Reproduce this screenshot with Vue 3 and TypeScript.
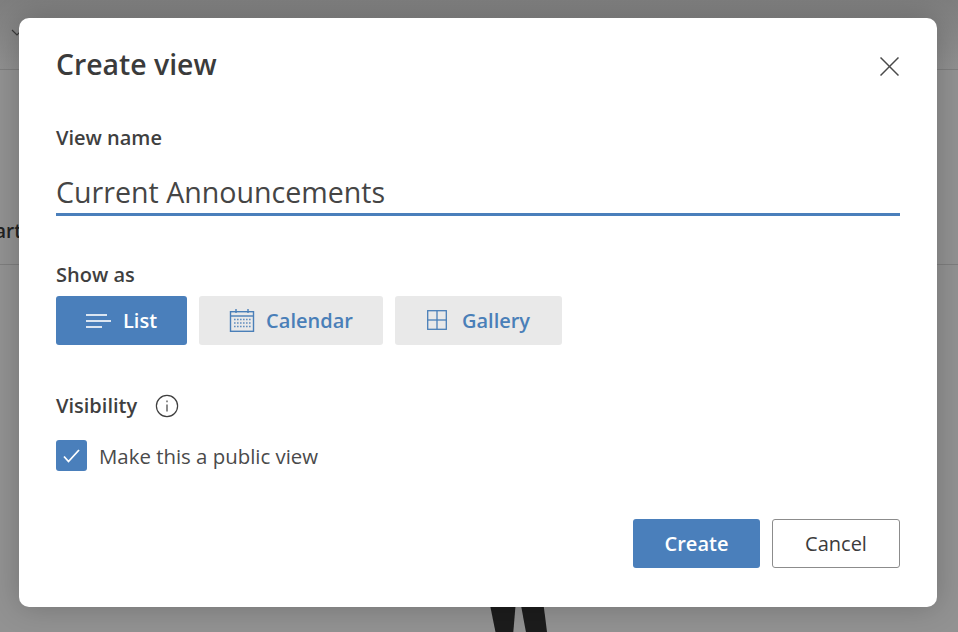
<script setup lang="ts">
import { ref } from 'vue';

const viewName = ref('Current Announcements');
const showAs = ref('list');
const isPublic = ref(true);

const viewTypes = [
  { id: 'list', label: 'List' },
  { id: 'calendar', label: 'Calendar' },
  { id: 'gallery', label: 'Gallery' }
];
</script>

<template>
  <div class="page">
    <!-- dimmed list behind the dialog -->
    <div class="behind">
      <div class="behind-bar">
        <svg class="behind-chevron" width="12" height="8" viewBox="0 0 12 8" fill="none" stroke="#3a3a3a" stroke-width="1.2">
          <polyline points="1,1 6,6 11,1" />
        </svg>
      </div>
      <div class="behind-row"><span class="behind-text">art</span></div>
      <div class="behind-figure">
        <span class="leg leg-left"></span>
        <span class="leg leg-right"></span>
      </div>
    </div>

    <div class="dialog">
      <div class="dialog-header">
        <h1 class="dialog-title">Create view</h1>
        <button class="btn-close" aria-label="Close">
          <svg width="19" height="19" viewBox="0 0 19 19" fill="none" stroke="#4a4a4a" stroke-width="1.5">
            <line x1="0.5" y1="0.5" x2="18.5" y2="18.5" />
            <line x1="18.5" y1="0.5" x2="0.5" y2="18.5" />
          </svg>
        </button>
      </div>

      <label class="field-label name-label">View name</label>
      <input v-model="viewName" class="name-input" type="text" />

      <div class="field-label show-label">Show as</div>
      <div class="type-row">
        <button
          v-for="t in viewTypes"
          :key="t.id"
          class="type-btn"
          :class="[t.id, { active: showAs === t.id }]"
          @click="showAs = t.id"
        >
          <svg v-if="t.id === 'list'" width="25" height="14" viewBox="0 0 25 14" fill="none" stroke="currentColor" stroke-width="1.6">
            <line x1="0" y1="1" x2="21" y2="1" />
            <line x1="0" y1="7" x2="25" y2="7" />
            <line x1="0" y1="13" x2="16" y2="13" />
          </svg>
          <svg v-else-if="t.id === 'calendar'" width="26" height="23" viewBox="0 0 26 23" fill="none" stroke="currentColor" stroke-width="1.4">
            <rect x="1.5" y="2.7" width="23" height="19.6" />
            <line x1="1.5" y1="7" x2="24.5" y2="7" />
            <line x1="7" y1="0" x2="7" y2="4" />
            <line x1="19" y1="0" x2="19" y2="4" />
            <g stroke-dasharray="1.6 1.4" stroke-width="1.5" opacity="0.85">
              <line x1="5" y1="10.5" x2="22" y2="10.5" />
              <line x1="5" y1="14" x2="22" y2="14" />
              <line x1="5" y1="17.5" x2="22" y2="17.5" />
            </g>
          </svg>
          <svg v-else class="gallery-icon" width="20" height="20" viewBox="0 0 20 20" fill="none" stroke="currentColor" stroke-width="1.3">
            <rect x="0.7" y="0.7" width="18.6" height="18.6" />
            <line x1="10" y1="0.7" x2="10" y2="19.3" />
            <line x1="0.7" y1="10" x2="19.3" y2="10" />
          </svg>
          <span>{{ t.label }}</span>
        </button>
      </div>

      <div class="visibility-row">
        <span class="field-label">Visibility</span>
        <svg width="24" height="24" viewBox="0 0 24 24" fill="none" stroke="#3f3f3f" stroke-width="1.2">
          <circle cx="12" cy="12" r="10.6" />
          <line x1="12" y1="10.5" x2="12" y2="17.5" />
          <line x1="12" y1="6.5" x2="12" y2="8.2" />
        </svg>
      </div>

      <label class="check-row" @click.prevent="isPublic = !isPublic">
        <span class="check-box" :class="{ on: isPublic }">
          <svg v-if="isPublic" width="17" height="14" viewBox="0 0 17 14" fill="none" stroke="#fff" stroke-width="1.8">
            <polyline points="1,7.5 5.5,12.5 16,1" />
          </svg>
        </span>
        <span class="check-text">Make this a public view</span>
      </label>

      <div class="dialog-footer">
        <button class="btn btn-create">Create</button>
        <button class="btn btn-cancel">Cancel</button>
      </div>
    </div>
  </div>
</template>

<style>
html, body {
  margin: 0;
  padding: 0;
}
</style>

<style scoped>
.page {
  position: relative;
  width: 958px;
  height: 632px;
  overflow: hidden;
  background: #929292;
  font-family: "Open Sans", "Noto Sans", sans-serif;
  color: #3b3b3b;
}

.behind-bar {
  height: 69px;
  border-bottom: 1px solid #7e7e7e;
  background: linear-gradient(#7e7e7e, #909090);
}

.behind-chevron {
  margin: 29px 0 0 11px;
}

.behind-row {
  height: 195px;
  border-bottom: 1px solid #7e7e7e;
  display: flex;
  align-items: flex-end;
  padding-bottom: 20px;
  box-sizing: border-box;
}

.behind-text {
  margin-left: -5px;
  font-size: 19px;
  font-weight: 600;
  color: #222;
}

.behind-figure {
  position: absolute;
  left: 489px;
  top: 600px;
  width: 60px;
  height: 32px;
}

.leg {
  position: absolute;
  top: 0;
  width: 27px;
  height: 32px;
  background: #1c1c1c;
}

.leg-left {
  left: 0;
  clip-path: polygon(0 0, 100% 0, 90% 100%, 24% 100%);
}

.leg-right {
  left: 31px;
  clip-path: polygon(0 0, 85% 0, 100% 100%, 22% 100%);
}

.dialog {
  position: absolute;
  left: 19px;
  top: 18px;
  width: 918px;
  height: 589px;
  box-sizing: border-box;
  padding: 0 37px;
  background: #fff;
  border-radius: 10px;
  box-shadow: 0 0 30px rgba(0, 0, 0, 0.22);
  display: flex;
  flex-direction: column;
}

.dialog-header {
  display: flex;
  justify-content: space-between;
  align-items: center;
  height: 94px;
}

.dialog-title {
  margin: 0 0 2px;
  font-size: 28.4px;
  font-weight: 600;
  color: #3b3b3b;
}

.btn-close {
  background: none;
  border: none;
  padding: 0;
  margin: 2px 1px 0 0;
  display: flex;
}

.field-label {
  font-size: 20px;
  font-weight: 600;
  color: #3f3f3f;
  line-height: 26px;
}

.name-label {
  margin-top: 13px;
}

.name-input {
  margin-top: 19px;
  height: 46px;
  border: none;
  border-bottom: 3px solid #4a7fbb;
  outline: none;
  padding: 0;
  font-family: inherit;
  font-size: 28.6px;
  color: #454545;
  box-sizing: border-box;
}

.show-label {
  margin-top: 46px;
}

.type-row {
  display: flex;
  gap: 12px;
  margin-top: 8px;
}

.type-btn {
  display: flex;
  align-items: center;
  justify-content: center;
  height: 49px;
  border: none;
  border-radius: 3px;
  background: #e9e9e9;
  color: #4a7fb8;
  font-family: inherit;
  font-size: 20px;
  font-weight: 600;
  padding: 0;
}

.type-btn.list { width: 131px; gap: 12px; }
.type-btn.calendar { width: 184px; gap: 11px; }
.type-btn.gallery { width: 167px; gap: 15px; }

.gallery-icon {
  margin-top: -2px;
}

.type-btn.active {
  background: #4a7fbb;
  color: #fff;
}

.visibility-row {
  display: flex;
  align-items: center;
  gap: 18px;
  margin-top: 48px;
}

.check-row {
  display: flex;
  align-items: center;
  gap: 12px;
  margin-top: 21px;
}

.check-box {
  width: 31px;
  height: 31px;
  border-radius: 3px;
  background: #fff;
  display: flex;
  align-items: center;
  justify-content: center;
}

.check-box.on {
  background: #4a7fbb;
}

.check-text {
  font-size: 20.4px;
  color: #4a4a4a;
}

.dialog-footer {
  display: flex;
  justify-content: flex-end;
  gap: 12px;
  margin-top: auto;
  margin-bottom: 39px;
}

.btn {
  height: 49px;
  border-radius: 3px;
  font-family: inherit;
  font-size: 20px;
  padding: 0;
  box-sizing: border-box;
}

.btn-create {
  width: 127px;
  border: none;
  background: #4a7fbb;
  color: #fff;
  font-weight: 600;
}

.btn-cancel {
  width: 128px;
  border: 1px solid #8c8c8c;
  background: #fff;
  color: #3b3b3b;
}
</style>
